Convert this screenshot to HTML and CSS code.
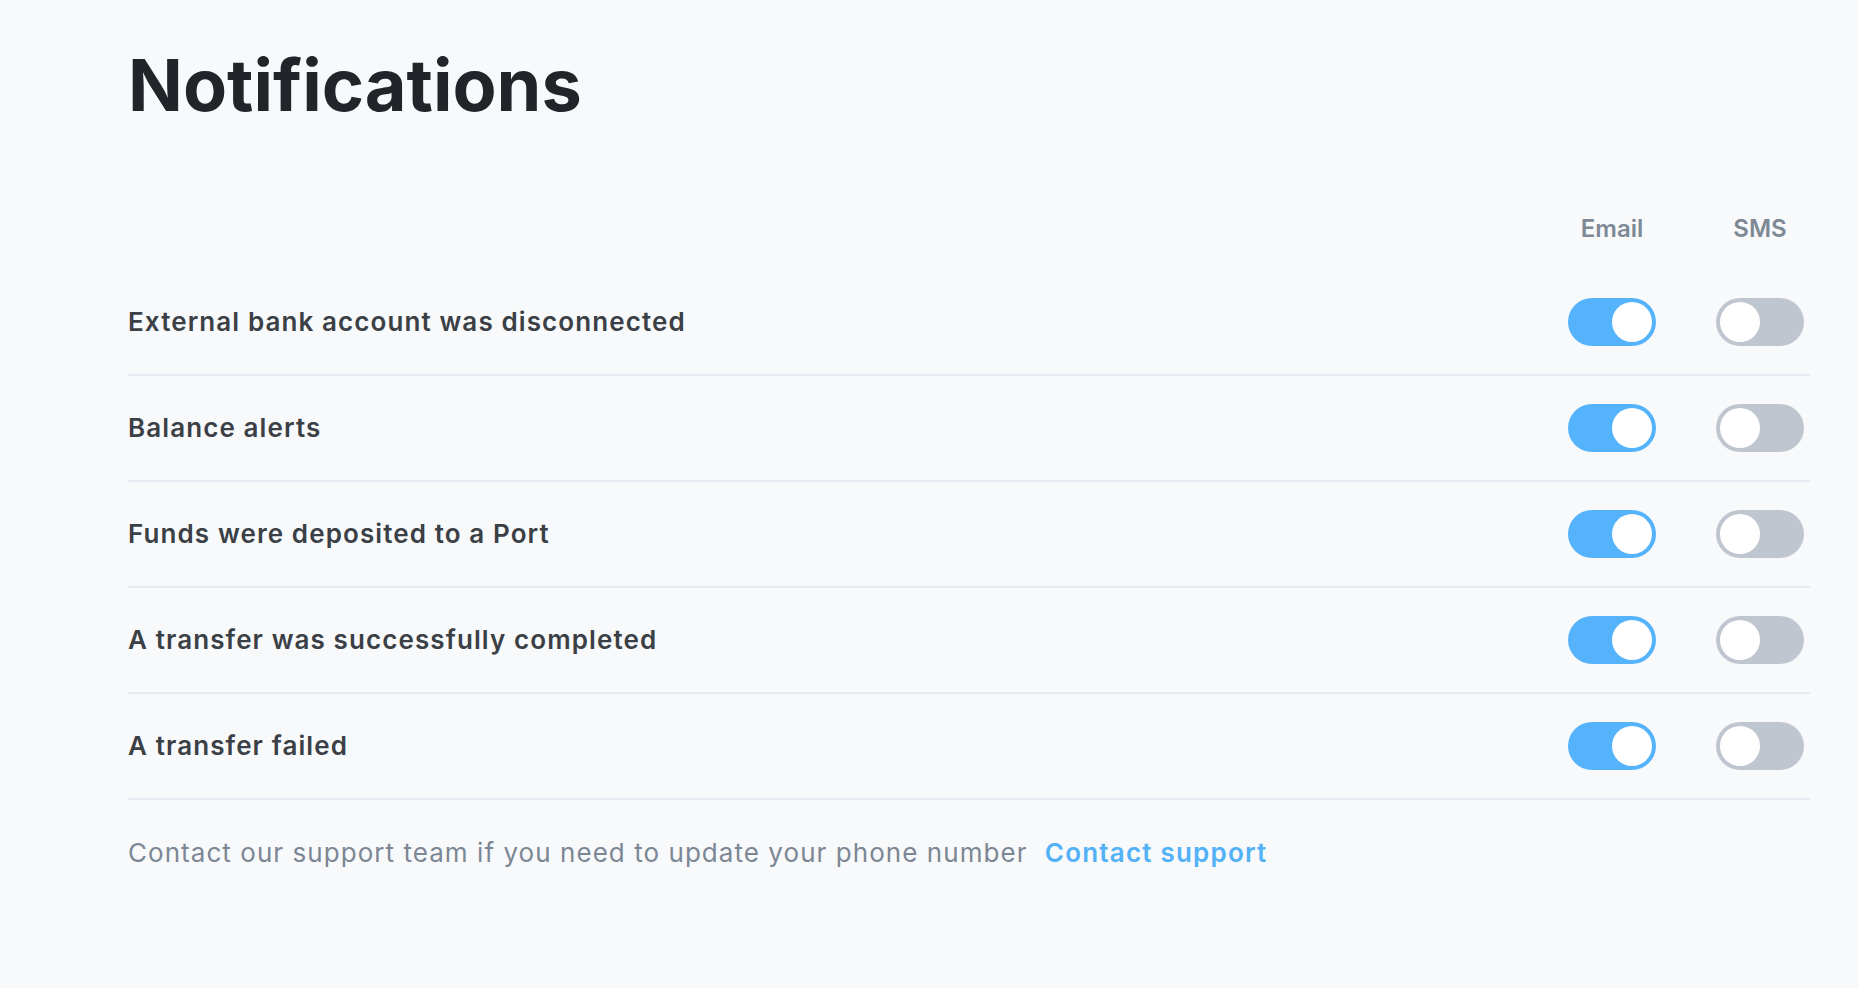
FILE: index.html
```html
<!DOCTYPE html>
<html lang="en">
<head>
<meta charset="utf-8">
<title>Notifications</title>
<link rel="stylesheet" href="styles.css">
</head>
<body>
<main class="page">
  <h1 class="title">Notifications</h1>
  <div class="table">
    <div class="head">
      <span class="label-col"></span>
      <span class="col-head">Email</span>
      <span class="col-head">SMS</span>
    </div>
    <div class="row">
      <span class="row-label">External bank account was disconnected</span>
      <span class="toggle on"><span class="knob"></span></span>
      <span class="toggle"><span class="knob"></span></span>
    </div>
    <div class="row">
      <span class="row-label">Balance alerts</span>
      <span class="toggle on"><span class="knob"></span></span>
      <span class="toggle"><span class="knob"></span></span>
    </div>
    <div class="row">
      <span class="row-label">Funds were deposited to a Port</span>
      <span class="toggle on"><span class="knob"></span></span>
      <span class="toggle"><span class="knob"></span></span>
    </div>
    <div class="row">
      <span class="row-label">A transfer was successfully completed</span>
      <span class="toggle on"><span class="knob"></span></span>
      <span class="toggle"><span class="knob"></span></span>
    </div>
    <div class="row">
      <span class="row-label">A transfer failed</span>
      <span class="toggle on"><span class="knob"></span></span>
      <span class="toggle"><span class="knob"></span></span>
    </div>
  </div>
  <p class="footer">Contact our support team if you need to update your phone number <a class="link" href="#">Contact support</a></p>
</main>
</body>
</html>
```
FILE: styles.css
```css
* { box-sizing: border-box; }
html, body { margin: 0; padding: 0; }
body {
  background: #f8f9fb;
  font-family: Inter, "Noto Sans", sans-serif;
  width: 1858px;
  height: 988px;
  overflow: hidden;
}
.page {
  padding: 49px 48px 0 128px;
}
.title {
  margin: 0;
  font-size: 72px;
  line-height: 72px;
  font-weight: 700;
  color: #212429;
}
.table {
  margin-top: 92px;
}
.head, .row {
  display: grid;
  grid-template-columns: 1fr 88px 88px;
  column-gap: 60px;
  padding-right: 6px;
  align-items: center;
}
.head {
  height: 32px;
  margin-bottom: 25px;
}
.col-head {
  font-size: 24px;
  line-height: 32px;
  font-weight: 600;
  color: #7e8995;
  text-align: center;
  white-space: nowrap;
}
.row {
  height: 106px;
  border-bottom: 2px solid #e5eaf0;
}
.row-label {
  font-size: 26px;
  line-height: 32px;
  font-weight: 600;
  letter-spacing: 1.1px;
  color: #3b3f46;
}
.toggle {
  position: relative;
  width: 88px;
  height: 48px;
  border-radius: 24px;
  background: #c0c6d0;
}
.toggle.on {
  background: #54b3fb;
}
.knob {
  position: absolute;
  top: 4px;
  left: 4px;
  width: 40px;
  height: 40px;
  border-radius: 50%;
  background: #ffffff;
}
.toggle.on .knob {
  left: 44px;
}
.footer {
  margin: 37px 0 0;
  font-size: 26px;
  line-height: 32px;
  font-weight: 400;
  letter-spacing: 1.05px;
  color: #7b8794;
}
.link {
  margin-left: 9px;
  color: #52b1f7;
  font-weight: 600;
  letter-spacing: 1.2px;
  text-decoration: none;
}
```
